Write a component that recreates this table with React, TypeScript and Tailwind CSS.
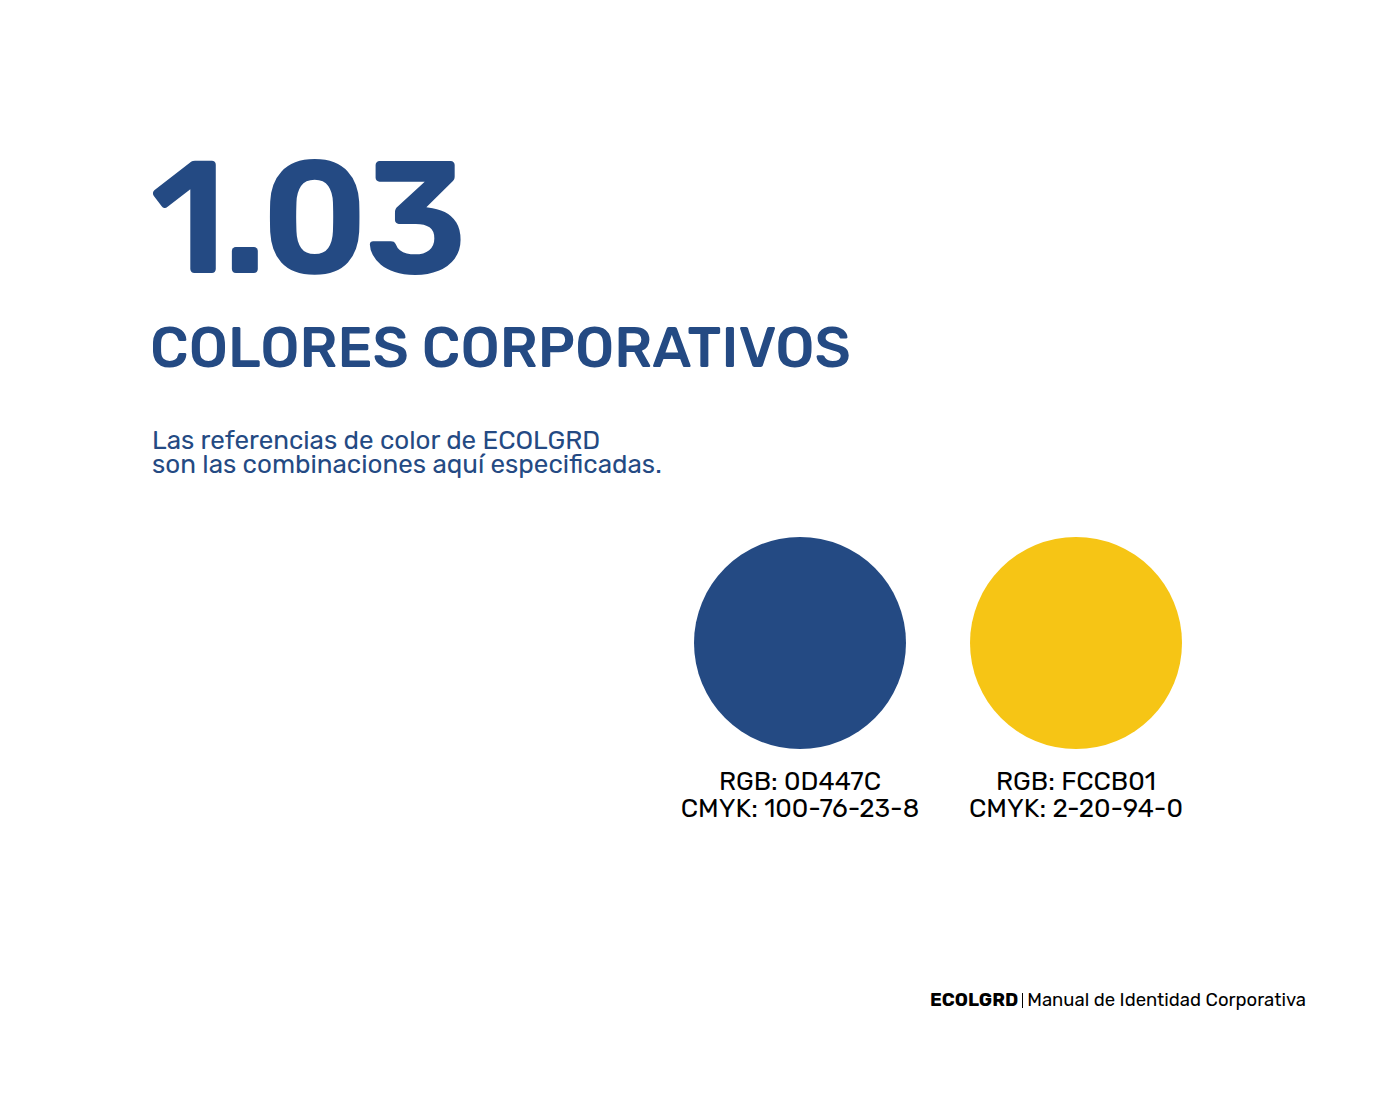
import React from "react";

const font = { fontFamily: "Rubik, Inter, 'Noto Sans', sans-serif" };

function Swatch({ color, rgb, cmyk }: { color: string; rgb: string; cmyk: string }) {
  return (
    <div className="flex w-[240px] flex-col items-center">
      <div className={`h-[212px] w-[212px] rounded-full ${color}`} />
      <div className="mt-[19px] whitespace-nowrap text-center text-[26px] leading-[27px] text-black">
        <div>{rgb}</div>
        <div>{cmyk}</div>
      </div>
    </div>
  );
}

export default function App() {
  return (
    <div className="relative flex h-[1110px] w-[1400px] flex-col bg-white" style={font}>
      <div className="flex flex-col pl-[150px] pt-[138px]">
        <div className="text-[160px] font-semibold leading-[160px] tracking-[-4px] text-[#244a83]">1.03</div>
        <div className="mt-[18px] text-[56.5px] font-medium leading-[64px] text-[#244a83]">COLORES CORPORATIVOS</div>
        <div className="mt-[49px] pl-[2px] text-[26px] leading-[24px] text-[#244a83]">
          <div>Las referencias de color de ECOLGRD</div>
          <div>son las combinaciones aquí especificadas.</div>
        </div>
      </div>
      <div className="mt-[60px] flex gap-[36px] pl-[680px]">
        <Swatch color="bg-[#244a83]" rgb="RGB: 0D447C" cmyk="CMYK: 100-76-23-8" />
        <Swatch color="bg-[#f6c515]" rgb="RGB: FCCB01" cmyk="CMYK: 2-20-94-0" />
      </div>
      <div className="mt-auto mb-[100px] flex items-center justify-end pr-[94px] text-[18.5px] leading-[20px] text-black">
        <span className="font-bold">ECOLGRD</span>
        <span className="mx-[4px] h-[15px] w-px bg-black" />
        <span>Manual de Identidad Corporativa</span>
      </div>
    </div>
  );
}
